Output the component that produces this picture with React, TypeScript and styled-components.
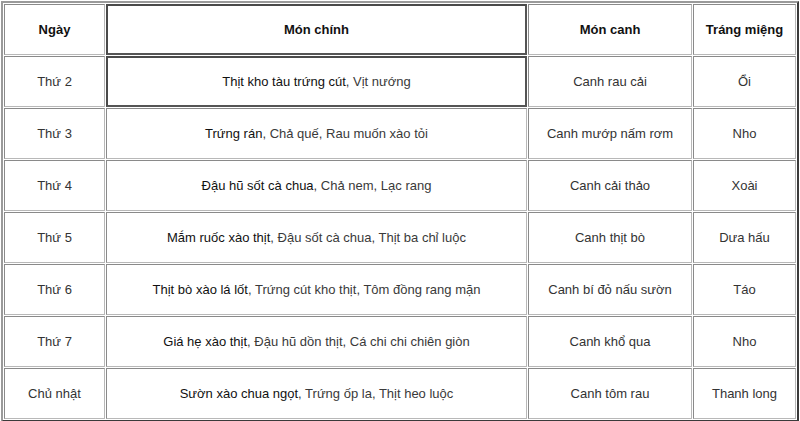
import React from 'react';
import styled, { createGlobalStyle } from 'styled-components';

const GlobalStyle = createGlobalStyle`
  html, body {
    margin: 0;
    padding: 0;
    background: #ffffff;
  }
  body {
    font-family: "Liberation Sans", Arial, sans-serif;
  }
`;

type Row = {
  day: string;
  main: string[];
  soup: string;
  dessert: string;
};

const rows: Row[] = [
  { day: 'Thứ 2', main: ['Thịt kho tàu trứng cút', 'Vịt nướng'], soup: 'Canh rau cải', dessert: 'Ổi' },
  { day: 'Thứ 3', main: ['Trứng rán', 'Chả quế', 'Rau muốn xào tỏi'], soup: 'Canh mướp nấm rơm', dessert: 'Nho' },
  { day: 'Thứ 4', main: ['Đậu hũ sốt cà chua', 'Chả nem', 'Lạc rang'], soup: 'Canh cải thảo', dessert: 'Xoài' },
  { day: 'Thứ 5', main: ['Mắm ruốc xào thịt', 'Đậu sốt cà chua', 'Thịt ba chỉ luộc'], soup: 'Canh thịt bò', dessert: 'Dưa hấu' },
  { day: 'Thứ 6', main: ['Thịt bò xào lá lốt', 'Trứng cút kho thịt', 'Tôm đồng rang mặn'], soup: 'Canh bí đỏ nấu sườn', dessert: 'Táo' },
  { day: 'Thứ 7', main: ['Giá hẹ xào thịt', 'Đậu hũ dồn thịt', 'Cá chi chi chiên giòn'], soup: 'Canh khổ qua', dessert: 'Nho' },
  { day: 'Chủ nhật', main: ['Sườn xào chua ngọt', 'Trứng ốp la', 'Thịt heo luộc'], soup: 'Canh tôm rau', dessert: 'Thanh long' },
];

export default function App() {
  return (
    <>
      <GlobalStyle />
      <Page>
        <MenuTable>
          <colgroup>
            <col style={{ width: 101 }} />
            <col style={{ width: 421 }} />
            <col style={{ width: 164 }} />
            <col style={{ width: 103 }} />
          </colgroup>
          <thead>
            <tr>
              <HeadCell>Ngày</HeadCell>
              <HeadCell $active>Món chính</HeadCell>
              <HeadCell>Món canh</HeadCell>
              <HeadCell>Tráng miệng</HeadCell>
            </tr>
          </thead>
          <tbody>
            {rows.map((r, i) => (
              <tr key={r.day}>
                <Cell>{r.day}</Cell>
                <Cell $active={i === 0}>
                  {r.main.map((m, j) => (
                    <Dish key={m} $first={j === 0}>
                      {j > 0 ? ', ' : ''}
                      {m}
                    </Dish>
                  ))}
                </Cell>
                <Cell>{r.soup}</Cell>
                <Cell>{r.dessert}</Cell>
              </tr>
            ))}
          </tbody>
        </MenuTable>
      </Page>
    </>
  );
}

const Page = styled.div`
  width: 800px;
  height: 421px;
  padding: 1px 1px 0 1px;
  box-sizing: border-box;
  overflow: hidden;
`;

const MenuTable = styled.table`
  width: 798px;
  table-layout: fixed;
  border-collapse: separate;
  border-spacing: 1px;
  border-style: solid;
  border-width: 2px;
  border-color: #9a9a9a #3a3a3a #3a3a3a #9a9a9a;
  font-size: 13px;
`;

const Cell = styled.td<{ $active?: boolean }>`
  box-sizing: border-box;
  height: 51px;
  padding: 0 4px;
  text-align: center;
  vertical-align: middle;
  color: #333333;
  border-style: solid;
  border-width: ${(p) => (p.$active ? '2px' : '1px')};
  border-color: ${(p) =>
    p.$active ? '#4a4a4a #555555 #555555 #4a4a4a' : '#8a8a8a #b8b8b8 #b8b8b8 #8a8a8a'};
  white-space: nowrap;
`;

const HeadCell = styled(Cell).attrs({ as: 'th' })`
  font-weight: bold;
  color: #111111;
`;

const Dish = styled.span<{ $first?: boolean }>`
  color: ${(p) => (p.$first ? '#111111' : '#3a3a3a')};
`;
